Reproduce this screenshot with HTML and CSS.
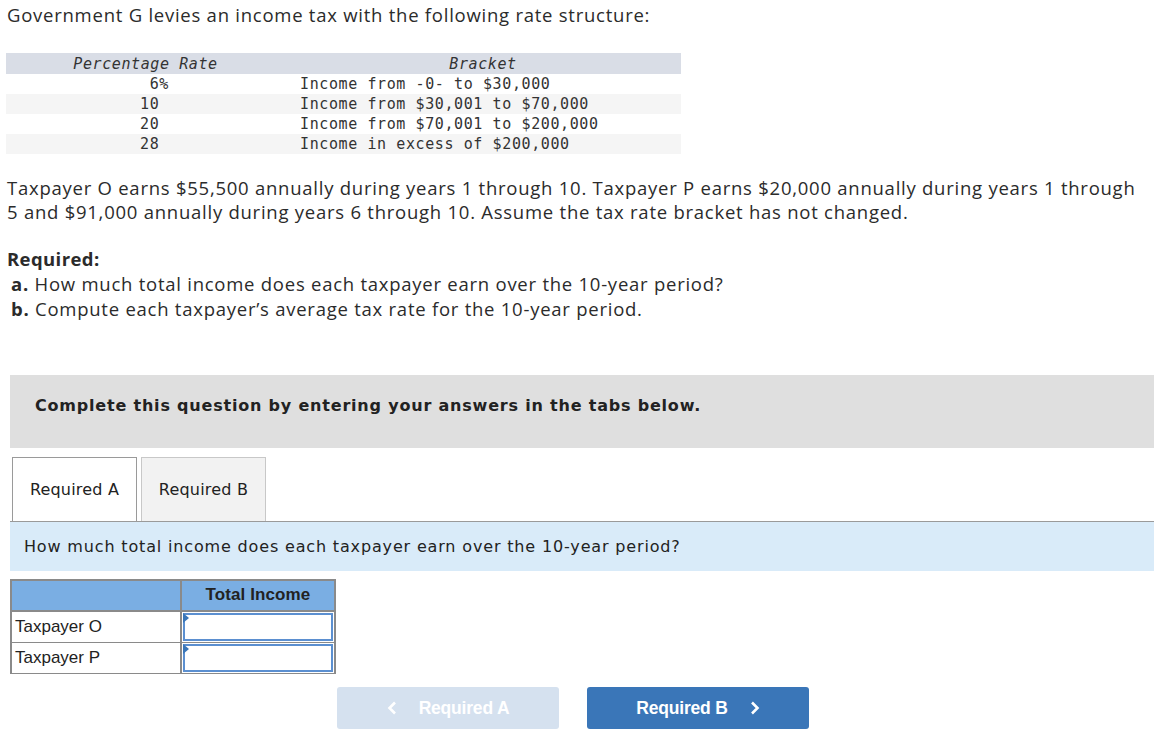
FILE: index.html
```html
<!DOCTYPE html>
<html>
<head>
<meta charset="utf-8">
<link rel="stylesheet" href="styles.css">
</head>
<body>
<div class="page">
  <p class="intro">Government G levies an income tax with the following rate structure:</p>

  <table class="rates">
    <thead>
      <tr><th class="c1">Percentage Rate</th><th class="c2">Bracket</th></tr>
    </thead>
    <tbody>
      <tr><td class="c1">&nbsp;6%</td><td class="c2">Income from -0- to $30,000</td></tr>
      <tr class="alt"><td class="c1">10</td><td class="c2">Income from $30,001 to $70,000</td></tr>
      <tr><td class="c1">20</td><td class="c2">Income from $70,001 to $200,000</td></tr>
      <tr class="alt"><td class="c1">28</td><td class="c2">Income in excess of $200,000</td></tr>
    </tbody>
  </table>

  <p class="desc">Taxpayer O earns $55,500 annually during years 1 through 10. Taxpayer P earns $20,000 annually during years 1 through 5 and $91,000 annually during years 6 through 10. Assume the tax rate bracket has not changed.</p>

  <div class="required">
    <div class="req-title">Required:</div>
    <div class="req-item"><b>a.</b> How much total income does each taxpayer earn over the 10-year period?</div>
    <div class="req-item"><b>b.</b> Compute each taxpayer’s average tax rate for the 10-year period.</div>
  </div>

  <div class="instructions">Complete this question by entering your answers in the tabs below.</div>

  <div class="tabs">
    <div class="tab active">Required A</div>
    <div class="tab">Required B</div>
  </div>

  <div class="panel">How much total income does each taxpayer earn over the 10-year period?</div>

  <table class="answer">
    <tr class="head"><th class="label"></th><th class="val">Total Income</th></tr>
    <tr><td class="label">Taxpayer O</td><td class="val"><div class="inp"><span class="flag"></span></div></td></tr>
    <tr><td class="label">Taxpayer P</td><td class="val"><div class="inp"><span class="flag"></span></div></td></tr>
  </table>

  <div class="nav">
    <div class="btn prev"><svg class="chev" width="10" height="14" viewBox="0 0 10 14"><polyline points="8,1.5 2.5,7 8,12.5" fill="none" stroke="#fff" stroke-width="2.6"/></svg><span>Required A</span></div>
    <div class="btn next"><span>Required B</span><svg class="chev" width="10" height="14" viewBox="0 0 10 14"><polyline points="2,1.5 7.5,7 2,12.5" fill="none" stroke="#fff" stroke-width="2.6"/></svg></div>
  </div>
</div>
</body>
</html>
```

FILE: styles.css
```css
* { box-sizing: border-box; }
body {
  margin: 0;
  background: #fff;
  color: #2b2b2b;
  font-family: "Open Sans", Roboto, sans-serif;
}
.page {
  width: 1154px;
  padding: 0 0 0 10px;
}
.intro {
  margin: 3px 0 0 -3px;
  font-size: 18.5px;
  line-height: 24px;
  letter-spacing: 0.75px;
}
.rates {
  margin: 26px 0 0 -4px;
  border-collapse: collapse;
  width: 675px;
  font-family: "DejaVu Sans Mono", monospace;
  font-size: 15px;
  letter-spacing: 0.6px;
  color: #333;
}
.rates th, .rates td {
  height: 20px;
  padding: 0;
  line-height: 20px;
  white-space: pre;
}
.rates th {
  background: #d9dde6;
  font-weight: normal;
  font-style: italic;
  text-align: center;
}
.rates thead th { padding-top: 1px; }
.rates th.c1 { width: 279px; }
.rates td.c1 { padding-left: 134px; }
.rates td.c2 { padding-left: 15px; }
.rates tr.alt td { background: #f5f5f5; }

.desc {
  margin: 22px 0 0 -3px;
  padding-right: 10px;
  font-size: 18.5px;
  line-height: 24px;
  letter-spacing: 0.75px;
}
.required {
  margin: 22px 0 0 -3px;
  font-size: 18.5px;
  line-height: 25px;
  letter-spacing: 0.75px;
}
.req-title { font-weight: bold; letter-spacing: 0.4px; }
.req-item { padding-left: 4px; }
.instructions {
  margin-top: 54px;
  height: 73px;
  background: #dfdfdf;
  padding: 21px 25px 0 25px;
  font-family: "DejaVu Sans", Verdana, sans-serif;
  font-weight: bold;
  font-size: 16px;
  letter-spacing: 0.8px;
  line-height: 20px;
  color: #222;
}
.tabs {
  margin-top: 9px;
  display: flex;
  gap: 4px;
  padding-left: 2px;
  border-bottom: 1px solid #9a9a9a;
}
.tab {
  height: 64px;
  width: 125px;
  display: flex;
  align-items: center;
  justify-content: center;
  font-family: "DejaVu Sans", Verdana, sans-serif;
  font-size: 16px;
  letter-spacing: 0.2px;
  color: #222;
  background: #f2f2f2;
  border: 1px solid #c8c8c8;
  border-bottom: none;
}
.tab.active {
  background: #fff;
  border-color: #9a9a9a;
}
.panel {
  height: 49px;
  background: #d9ebf9;
  padding: 15px 14px 0 14px;
  font-family: "DejaVu Sans", Verdana, sans-serif;
  font-size: 16px;
  letter-spacing: 0.84px;
  line-height: 20px;
  color: #222;
}
.answer {
  margin-top: 8px;
  border-collapse: collapse;
  width: 326px;
  font-family: "Liberation Sans", Arial, sans-serif;
  font-size: 17px;
  color: #222;
}
.answer th, .answer td {
  border: 2px solid #8a8a8a;
  height: 31px;
  padding: 0;
}
.answer tr.head th {
  background: #7aaee3;
  font-weight: bold;
  text-align: center;
  vertical-align: top;
  padding-top: 4px;
  border-color: #8a8a8a;
  letter-spacing: 0.1px;
}
.answer .label { width: 170px; padding-left: 3px; text-align: left; }
.answer td.label { border-width: 1px 2px 1px 2px; }
.answer td.val { padding: 1px; border-width: 1px 2px 1px 1px; }
.inp {
  position: relative;
  height: 28px;
  border: 2px solid #5b8fd0;
  background: #fff;
}
.flag {
  position: absolute;
  left: -2px;
  top: -2px;
  width: 0;
  height: 0;
  border-top: 5px solid transparent;
  border-bottom: 5px solid transparent;
  border-left: 6px solid #3a76b8;
}
.nav {
  margin-top: 13px;
  display: flex;
  gap: 28px;
  padding-left: 327px;
}
.btn {
  width: 222px;
  height: 42px;
  border-radius: 3px;
  display: flex;
  align-items: center;
  justify-content: center;
  gap: 22px;
  font-family: "Liberation Sans", Arial, sans-serif;
  font-weight: bold;
  font-size: 17.5px;
  letter-spacing: -0.2px;
  color: #fff;
}
.btn.prev { background: #d5e1ef; }
.btn.next { background: #3a76b8; }
.chev { display: block; }
```
